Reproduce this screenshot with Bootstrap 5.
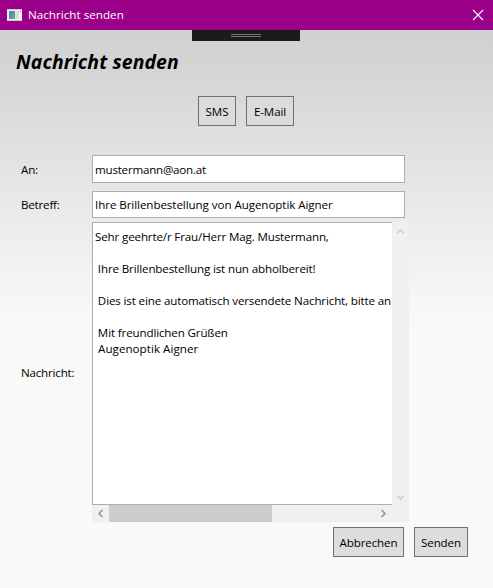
<!DOCTYPE html>
<html lang="de">
<head>
<meta charset="utf-8">
<meta name="viewport" content="width=device-width, initial-scale=1">
<title>Nachricht senden</title>
<link href="https://cdn.jsdelivr.net/npm/bootstrap@5.3.0/dist/css/bootstrap.min.css" rel="stylesheet">
<style>
body{font-family:"Open Sans","Noto Sans",sans-serif;font-size:11.6px;line-height:16px;color:#000;height:588px;background:linear-gradient(180deg,#d0d0d0 30px,#e0dedf 140px,#efedee 240px,#f9f8f6 310px,#faf9f8 330px)}
.titlebar{height:30px;background:#9b008a;padding:0 9px 0 7px}
.titlebar .caption{margin-left:6px;letter-spacing:.04px}
.grip{width:108px;height:11px;background:#1b1b1b;margin-left:192px;padding-top:4px}
.grip span{display:block;width:30px;height:3px;margin:0 auto;border:solid #777;border-width:1px 0}
h1{font-size:19.4px;line-height:26px;font-weight:700;font-style:italic;margin:8px 0 0 16px;letter-spacing:.12px}
.btn-flat{height:30px;padding:2px 0 0;border:1px solid #707070;border-radius:0;background:#ddd;color:#000;font-size:inherit;line-height:26px;letter-spacing:-.12px;white-space:nowrap}
.btn-flat:hover{background:#d3d3d3;border-color:#707070}
.channels{gap:10px;margin:21px 0 0 198px}
.channels .btn-flat{background:#dcdbdc}
.w-sms{width:38px}.w-mail{width:48px}.w-cancel{width:71px}.w-send{width:54px}
.mailform{margin:29px 0 0 21px}
.field-name{width:71px;flex:none;padding-top:2px;letter-spacing:-.2px}
.subject-row .field-name{padding-top:0}
.mailform .form-control{width:313px;padding:1px 2px 0 2px;border:1px solid #abadb3;border-radius:0;font-size:inherit;line-height:16px;color:#000;background:#fff}
#to{height:28px;letter-spacing:-.22px}
.mailform #subject{height:27px;padding:0 2px 1px;letter-spacing:-.07px}
.editor{display:grid;grid-template-columns:300px 17px;grid-template-rows:283px 17px}
.message{border:1px solid #abadb3;border-right:0;background:#fff;padding:6px 0 0 2px;white-space:pre;overflow:hidden;letter-spacing:-.145px}
.message div{height:16px}
.message .sender{letter-spacing:.04px}
.track{background:#f0f0f0}
.thumb{width:163px;background:#cdcdcd}
svg{display:block}
.actions{gap:10px;margin:5px 25px 0 0}
</style>
</head>
<body class="m-0 overflow-hidden">
<header class="titlebar d-flex align-items-center text-white">
  <svg width="15" height="12" viewBox="0 0 15 12"><defs><linearGradient id="g" x2="1" y2="1"><stop stop-color="#4a7fa8"/><stop offset="1" stop-color="#65b58c"/></linearGradient></defs><path fill="#f3f3f3" d="M0 0h15v12H0z"/><path fill="#cfc6cf" d="M0 0h15v1H0zM0 11h15v1H0z"/><path fill="url(#g)" d="M2 2h6v8H2z"/><path fill="#dedede" d="M8 2h4v8H8z"/><path fill="#fff" d="M12 2h1v8h-1z"/><path fill="#75a98c" d="M13 2h1v1h-1z"/></svg>
  <span class="caption">Nachricht senden</span>
  <svg class="ms-auto" width="12" height="12" viewBox="0 0 12 12"><path d="M1 1l10 10M11 1L1 11" stroke="#fff" stroke-width="1.1"/></svg>
</header>
<div class="grip"><span></span></div>
<main>
  <h1>Nachricht senden</h1>
  <div class="channels d-flex">
    <button type="button" class="btn btn-flat w-sms">SMS</button>
    <button type="button" class="btn btn-flat w-mail">E-Mail</button>
  </div>
  <form class="mailform">
    <div class="d-flex align-items-center mb-2">
      <label for="to" class="field-name">An:</label>
      <input id="to" class="form-control" value="mustermann@aon.at">
    </div>
    <div class="subject-row d-flex align-items-center mb-1">
      <label for="subject" class="field-name">Betreff:</label>
      <input id="subject" class="form-control" value="Ihre Brillenbestellung von Augenoptik Aigner">
    </div>
    <div class="d-flex align-items-center">
      <span class="field-name">Nachricht:</span>
      <div class="editor">
        <div class="message"><div>Sehr geehrte/r Frau/Herr Mag. Mustermann,</div><div></div><div> Ihre Brillenbestellung ist nun abholbereit!</div><div></div><div> Dies ist eine automatisch versendete Nachricht, bitte an</div><div></div><div> Mit freundlichen Grüßen</div><div class="sender"> Augenoptik Aigner</div></div>
        <div class="track d-flex flex-column justify-content-between">
          <svg width="17" height="17"><path d="M5 11.5L8.5 8L12 11.5" fill="none" stroke="#cfcfcf" stroke-width="1.7"/></svg>
          <svg width="17" height="17"><path d="M5 7.5L8.5 11L12 7.5" fill="none" stroke="#cfcfcf" stroke-width="1.7"/></svg>
        </div>
        <div class="track d-flex">
          <svg width="17" height="17"><path d="M10.5 5L7 8.5L10.5 12" fill="none" stroke="#999" stroke-width="1.7"/></svg>
          <div class="thumb"></div>
          <svg class="ms-auto" width="17" height="17"><path d="M6.5 5L10 8.5L6.5 12" fill="none" stroke="#999" stroke-width="1.7"/></svg>
        </div>
        <div class="track"></div>
      </div>
    </div>
  </form>
  <div class="actions d-flex justify-content-end">
    <button type="button" class="btn btn-flat w-cancel">Abbrechen</button>
    <button type="button" class="btn btn-flat w-send">Senden</button>
  </div>
</main>
<script src="https://cdn.jsdelivr.net/npm/bootstrap@5.3.0/dist/js/bootstrap.bundle.min.js"></script>
</body>
</html>
